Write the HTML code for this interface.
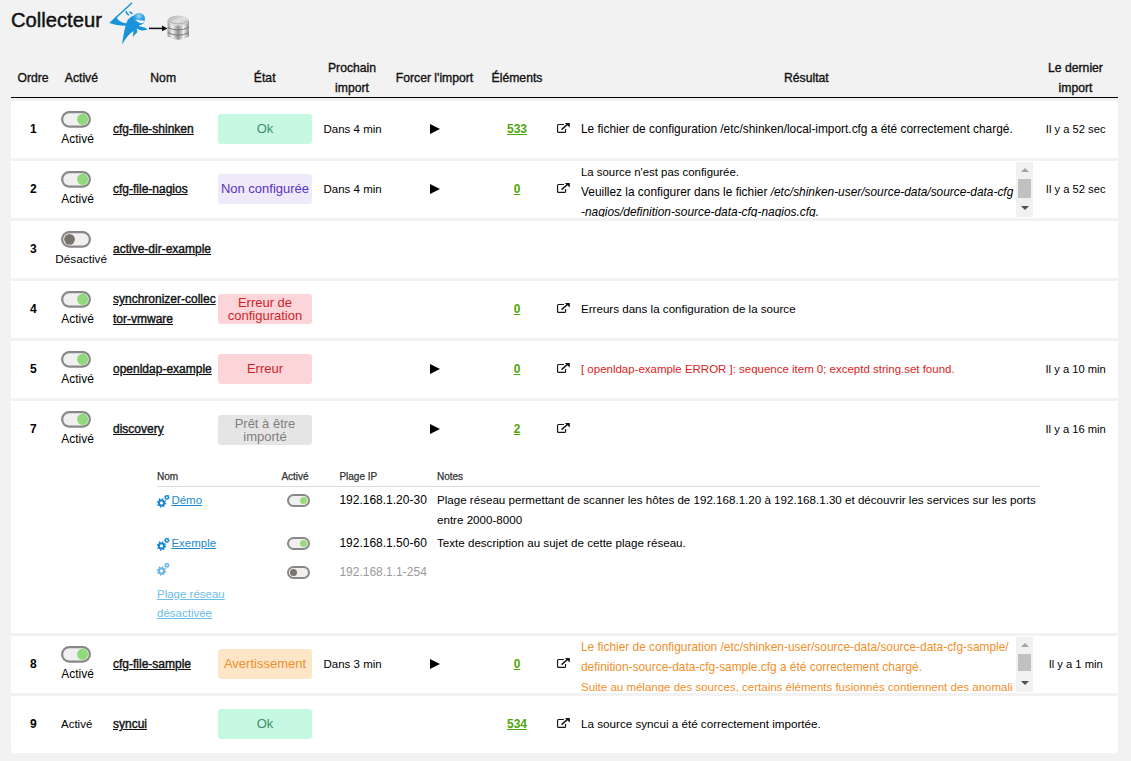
<!DOCTYPE html><html><head><meta charset='utf-8'><title>Collecteur</title><style>
*{box-sizing:border-box}
html,body{margin:0;padding:0}
body{width:1131px;height:761px;overflow:hidden;position:relative;background:#f2f2f2;font-family:"Liberation Sans",sans-serif;color:#000;font-size:12px}
.a{position:absolute;white-space:nowrap}
.row{position:absolute;left:11px;width:1107px;background:#fff}
.th{color:#111;font-size:12.2px;-webkit-text-stroke:0.35px #111}
.nm{text-decoration:underline;color:#111;font-size:12px;-webkit-text-stroke:0.4px #111}
.cnt{font-weight:bold;text-decoration:underline;color:#4fa60a}
.bd{position:absolute;left:218px;width:94px;height:30px;border-radius:3px;text-align:center;font-size:13px}
.play{position:absolute;left:430px;width:0;height:0;border-top:5px solid transparent;border-bottom:5px solid transparent;border-left:10px solid #000}
.ext{position:absolute}
.sb{position:absolute;left:1016px;width:17px;background:#f1f1f1}
.sb .t{position:absolute;left:2px;width:13px;background:#c1c1c1}
.sb .u{position:absolute;left:5px;top:6px;width:0;height:0;border-left:4px solid transparent;border-right:4px solid transparent;border-bottom:4px solid #a3a3a3}
.sb .d{position:absolute;left:5px;bottom:7px;width:0;height:0;border-left:4px solid transparent;border-right:4px solid transparent;border-top:4px solid #505050}
.stog{position:absolute;left:287px;width:23px;height:13px;border:2px solid #888;border-radius:6.5px;background:#f0f0f0}
.stog i{position:absolute;top:1px;right:1px;width:7px;height:7px;border-radius:50%;background:#9ad97b}
.stog.off i{left:1px;right:auto;background:#7a746f}
.sth{font-size:10px;color:#333;-webkit-text-stroke:0.25px #333}
.lnk{color:#1d8ad0;text-decoration:underline}
</style></head><body>
<div class='a' style='left:11px;top:8px;font-size:20.2px;line-height:24px;color:#111;-webkit-text-stroke:0.45px #111'>Collecteur</div>
<svg class='a' style='left:105px;top:0' width='90' height='46' viewBox='105 0 90 46'>
<defs>
<radialGradient id='hg' cx='0.5' cy='0.25' r='0.7'><stop offset='0' stop-color='#a9dcf7'/><stop offset='0.45' stop-color='#3aa6e6'/><stop offset='1' stop-color='#1591da'/></radialGradient>
<linearGradient id='dbg' x1='0' x2='1'><stop offset='0' stop-color='#9a9a9a'/><stop offset='0.22' stop-color='#f2f2f2'/><stop offset='0.5' stop-color='#8f8f8f'/><stop offset='0.75' stop-color='#f0f0f0'/><stop offset='1' stop-color='#8a8a8a'/></linearGradient>
<linearGradient id='dbt' x1='0' y1='0' x2='1' y2='1'><stop offset='0' stop-color='#a8a8a8'/><stop offset='0.5' stop-color='#dedede'/><stop offset='1' stop-color='#c8c8c8'/></linearGradient>
</defs>
<g fill='#1793db'>
<path d='M110.4 22.7 L131.6 3.3' stroke='#1793db' stroke-width='1.45' stroke-linecap='round'/>
<path d='M110.3 22.9 L116.4 16.1 Q117.4 22.6 127.5 23.6 L127.8 25.6 Q117.5 26.2 110.3 22.9 Z'/>
<path d='M128 19.5 Q131 16 135 15 L139.4 26 L140.2 26.6 Q143 27.2 144.6 27.4 L147.6 29.5 Q144 30.6 141.6 30.4 L136.4 28.6 Q137.8 30.5 137.2 32.2 L132.6 37.2 Q133.6 33.5 133.4 31 Q127.6 34.5 122.1 44.6 Q123.4 33.5 125.4 26.5 Q126.4 21.8 128 19.5 Z'/>
<path d='M126.1 11.2 Q126.4 14 129.1 15.1' fill='none' stroke='#1793db' stroke-width='1.5'/>
<path d='M129.3 12.1 Q131.2 12.4 132.4 14.1' fill='none' stroke='#1793db' stroke-width='1.5'/>
</g>
<circle cx='139' cy='19.1' r='6.1' fill='url(#hg)'/>
<path d='M135.6 19.6 Q140 21 145 20.5 Q143.6 23.3 140.6 23.2 Q137.4 22.6 135.6 19.6 Z' fill='#fff'/>
<path d='M149 28.4 L163 28.4' stroke='#111' stroke-width='1.5'/>
<path d='M162 25.6 L167.6 28.4 L162 31.2 Z' fill='#111'/>
<path d='M167.6 20.6 L167.6 36.6 Q178.2 43 188.9 36.6 L188.9 20.6 Z' fill='url(#dbg)'/>
<ellipse cx='178.25' cy='20.6' rx='10.65' ry='5.2' fill='url(#dbt)'/>
<path d='M167.6 20.6 Q178.2 27.2 188.9 20.6' fill='none' stroke='#9a9a9a' stroke-width='0.7'/>
<path d='M167.6 27.4 Q178.2 32.6 188.9 27.4' stroke='#6f6f6f' stroke-width='0.9' fill='none'/>
<path d='M167.6 32.6 Q178.2 37.8 188.9 32.6' stroke='#6f6f6f' stroke-width='0.9' fill='none'/>
</svg>
<div class='a th' style='top:68px;line-height:20px;left:3.0px;width:60px;text-align:center;'>Ordre</div>
<div class='a th' style='top:68px;line-height:20px;left:51.400000000000006px;width:60px;text-align:center;'>Activé</div>
<div class='a th' style='top:68px;line-height:20px;left:133.2px;width:60px;text-align:center;'>Nom</div>
<div class='a th' style='top:68px;line-height:20px;left:234.7px;width:60px;text-align:center;'>État</div>
<div class='a th' style='top:58px;line-height:20px;left:312.0px;width:80px;text-align:center;'>Prochain</div>
<div class='a th' style='top:78px;line-height:20px;left:312.0px;width:80px;text-align:center;'>import</div>
<div class='a th' style='top:68px;line-height:20px;left:384.5px;width:100px;text-align:center;'>Forcer l'import</div>
<div class='a th' style='top:68px;line-height:20px;left:477.0px;width:80px;text-align:center;'>Éléments</div>
<div class='a th' style='top:68px;line-height:20px;left:756.4px;width:100px;text-align:center;'>Résultat</div>
<div class='a th' style='top:58px;line-height:20px;left:1035.5px;width:80px;text-align:center;'>Le dernier</div>
<div class='a th' style='top:78px;line-height:20px;left:1035.5px;width:80px;text-align:center;'>import</div>
<div class='a' style='left:11px;top:97px;width:1107px;height:1px;background:#000'></div>
<div class='row' style='top:101px;height:57px;border-top-right-radius:4px'></div>
<div class='a ' style='top:119px;line-height:20px;left:18.299999999999997px;width:30px;text-align:center;font-weight:bold'>1</div>
<svg class='a' style='left:60px;top:110px' width='32' height='18' viewBox='0 0 32 18'><rect x='2.1' y='2.1' width='27.8' height='14.5' rx='7.25' fill='#f0f0f0' stroke='#888' stroke-width='2.2'/><circle cx='22.6' cy='9.35' r='5.55' fill='#8fd97a'/></svg>
<div class='a ' style='top:129px;line-height:20px;font-size:12px;left:37.599999999999994px;width:80px;text-align:center;'>Activé</div>
<div class='a nm' style='top:119px;line-height:20px;left:113px;'>cfg-file-shinken</div>
<div class='a ' style='top:119px;line-height:20px;font-size:11.5px;left:323.5px;'>Dans 4 min</div>
<div class='play' style='top:124px'></div>
<div class='a cnt' style='top:119px;line-height:20px;left:497.0px;width:40px;text-align:center;'>533</div>
<svg class='ext' style='top:122px;left:556px' width='15' height='13' viewBox='0 0 15 13'><path d='M8 2.45 H2.5 Q1.55 2.45 1.55 3.4 V9.4 Q1.55 10.35 2.5 10.35 H8.6 Q9.55 10.35 9.55 9.4 V7' fill='none' stroke='#151515' stroke-width='1.15'/><path d='M5.6 7.6 L11.6 2.2' stroke='#151515' stroke-width='1.5'/><path d='M8.8 1 H13.8 V5.6 Z' fill='#151515'/></svg>
<div class='a ' style='top:119px;line-height:20px;left:581px;color:#000;font-size:11.88px'>Le fichier de configuration /etc/shinken/local-import.cfg a été correctement chargé.</div>
<div class='a ' style='top:119px;line-height:20px;font-size:11.2px;left:1025.7px;width:100px;text-align:center;'>Il y a 52 sec</div>
<div class='bd' style='top:114px;background:#c6f8e2;color:#3e8f6a;line-height:30px'>Ok</div>
<div class='row' style='top:161px;height:57px;'></div>
<div class='a ' style='top:179px;line-height:20px;left:18.299999999999997px;width:30px;text-align:center;font-weight:bold'>2</div>
<svg class='a' style='left:60px;top:170px' width='32' height='18' viewBox='0 0 32 18'><rect x='2.1' y='2.1' width='27.8' height='14.5' rx='7.25' fill='#f0f0f0' stroke='#888' stroke-width='2.2'/><circle cx='22.6' cy='9.35' r='5.55' fill='#8fd97a'/></svg>
<div class='a ' style='top:189px;line-height:20px;font-size:12px;left:37.599999999999994px;width:80px;text-align:center;'>Activé</div>
<div class='a nm' style='top:179px;line-height:20px;left:113px;'>cfg-file-nagios</div>
<div class='a ' style='top:179px;line-height:20px;font-size:11.5px;left:323.5px;'>Dans 4 min</div>
<div class='play' style='top:184px'></div>
<div class='a cnt' style='top:179px;line-height:20px;left:497.0px;width:40px;text-align:center;'>0</div>
<svg class='ext' style='top:182px;left:556px' width='15' height='13' viewBox='0 0 15 13'><path d='M8 2.45 H2.5 Q1.55 2.45 1.55 3.4 V9.4 Q1.55 10.35 2.5 10.35 H8.6 Q9.55 10.35 9.55 9.4 V7' fill='none' stroke='#151515' stroke-width='1.15'/><path d='M5.6 7.6 L11.6 2.2' stroke='#151515' stroke-width='1.5'/><path d='M8.8 1 H13.8 V5.6 Z' fill='#151515'/></svg>
<div class='a ' style='top:179px;line-height:20px;font-size:11.2px;left:1025.7px;width:100px;text-align:center;'>Il y a 52 sec</div>
<div class='bd' style='top:174px;background:#efeafa;color:#5a33c2;line-height:30px'>Non configurée</div>
<div class='a' style='left:581px;top:162px;width:435px;height:55px;overflow:hidden;font-size:11.9px;line-height:20px;color:#000'><span style='font-size:11.4px'>La source n'est pas configurée.</span><br>Veuillez la configurer dans le fichier <i>/etc/shinken-user/source-data/source-data-cfg</i><br><i>-nagios/definition-source-data-cfg-nagios.cfg.</i></div>
<div class='sb' style='top:162px;height:55px'><div class='u'></div><div class='t' style='top:17px;height:19px'></div><div class='d'></div></div>
<div class='row' style='top:221px;height:57px;'></div>
<div class='a ' style='top:239px;line-height:20px;left:18.299999999999997px;width:30px;text-align:center;font-weight:bold'>3</div>
<svg class='a' style='left:60px;top:230px' width='32' height='18' viewBox='0 0 32 18'><rect x='2.1' y='2.1' width='27.8' height='14.5' rx='7.25' fill='#f0f0f0' stroke='#888' stroke-width='2.2'/><circle cx='9.55' cy='9.35' r='5.35' fill='#7a746f'/></svg>
<div class='a ' style='top:249px;line-height:20px;font-size:11.8px;left:41.2px;width:80px;text-align:center;'>Désactivé</div>
<div class='a nm' style='top:239px;line-height:20px;left:113px;'>active-dir-example</div>
<div class='row' style='top:281px;height:57px;'></div>
<div class='a ' style='top:299px;line-height:20px;left:18.299999999999997px;width:30px;text-align:center;font-weight:bold'>4</div>
<svg class='a' style='left:60px;top:290px' width='32' height='18' viewBox='0 0 32 18'><rect x='2.1' y='2.1' width='27.8' height='14.5' rx='7.25' fill='#f0f0f0' stroke='#888' stroke-width='2.2'/><circle cx='22.6' cy='9.35' r='5.55' fill='#8fd97a'/></svg>
<div class='a ' style='top:309px;line-height:20px;font-size:12px;left:37.599999999999994px;width:80px;text-align:center;'>Activé</div>
<div class='a nm' style='top:289px;line-height:20px;left:113px;'>synchronizer-collec</div>
<div class='a nm' style='top:309px;line-height:20px;left:113px;'>tor-vmware</div>
<div class='bd' style='top:294px;background:#fbd5d8;color:#cf1f2b;line-height:12.5px;padding-top:3px'>Erreur de<br>configuration</div>
<div class='a cnt' style='top:299px;line-height:20px;left:497.0px;width:40px;text-align:center;'>0</div>
<svg class='ext' style='top:302px;left:556px' width='15' height='13' viewBox='0 0 15 13'><path d='M8 2.45 H2.5 Q1.55 2.45 1.55 3.4 V9.4 Q1.55 10.35 2.5 10.35 H8.6 Q9.55 10.35 9.55 9.4 V7' fill='none' stroke='#151515' stroke-width='1.15'/><path d='M5.6 7.6 L11.6 2.2' stroke='#151515' stroke-width='1.5'/><path d='M8.8 1 H13.8 V5.6 Z' fill='#151515'/></svg>
<div class='a ' style='top:299px;line-height:20px;left:581px;font-size:11.6px'>Erreurs dans la configuration de la source</div>
<div class='row' style='top:341px;height:57px;'></div>
<div class='a ' style='top:359px;line-height:20px;left:18.299999999999997px;width:30px;text-align:center;font-weight:bold'>5</div>
<svg class='a' style='left:60px;top:350px' width='32' height='18' viewBox='0 0 32 18'><rect x='2.1' y='2.1' width='27.8' height='14.5' rx='7.25' fill='#f0f0f0' stroke='#888' stroke-width='2.2'/><circle cx='22.6' cy='9.35' r='5.55' fill='#8fd97a'/></svg>
<div class='a ' style='top:369px;line-height:20px;font-size:12px;left:37.599999999999994px;width:80px;text-align:center;'>Activé</div>
<div class='a nm' style='top:359px;line-height:20px;left:113px;'>openldap-example</div>
<div class='play' style='top:364px'></div>
<div class='a cnt' style='top:359px;line-height:20px;left:497.0px;width:40px;text-align:center;'>0</div>
<svg class='ext' style='top:362px;left:556px' width='15' height='13' viewBox='0 0 15 13'><path d='M8 2.45 H2.5 Q1.55 2.45 1.55 3.4 V9.4 Q1.55 10.35 2.5 10.35 H8.6 Q9.55 10.35 9.55 9.4 V7' fill='none' stroke='#151515' stroke-width='1.15'/><path d='M5.6 7.6 L11.6 2.2' stroke='#151515' stroke-width='1.5'/><path d='M8.8 1 H13.8 V5.6 Z' fill='#151515'/></svg>
<div class='a ' style='top:359px;line-height:20px;left:581px;color:#dd2222;font-size:11.48px'>[ openldap-example ERROR ]: sequence item 0; exceptd string.set found.</div>
<div class='a ' style='top:359px;line-height:20px;font-size:11.2px;left:1025.7px;width:100px;text-align:center;'>Il y a 10 min</div>
<div class='bd' style='top:354px;background:#fbd5d8;color:#cf1f2b;line-height:30px'>Erreur</div>
<div class='row' style='top:401px;height:232px;'></div>
<div class='a ' style='top:419px;line-height:20px;left:18.299999999999997px;width:30px;text-align:center;font-weight:bold'>7</div>
<svg class='a' style='left:60px;top:410px' width='32' height='18' viewBox='0 0 32 18'><rect x='2.1' y='2.1' width='27.8' height='14.5' rx='7.25' fill='#f0f0f0' stroke='#888' stroke-width='2.2'/><circle cx='22.6' cy='9.35' r='5.55' fill='#8fd97a'/></svg>
<div class='a ' style='top:429px;line-height:20px;font-size:12px;left:37.599999999999994px;width:80px;text-align:center;'>Activé</div>
<div class='a nm' style='top:419px;line-height:20px;left:113px;'>discovery</div>
<div class='play' style='top:424px'></div>
<div class='a cnt' style='top:419px;line-height:20px;left:497.0px;width:40px;text-align:center;'>2</div>
<svg class='ext' style='top:422px;left:556px' width='15' height='13' viewBox='0 0 15 13'><path d='M8 2.45 H2.5 Q1.55 2.45 1.55 3.4 V9.4 Q1.55 10.35 2.5 10.35 H8.6 Q9.55 10.35 9.55 9.4 V7' fill='none' stroke='#151515' stroke-width='1.15'/><path d='M5.6 7.6 L11.6 2.2' stroke='#151515' stroke-width='1.5'/><path d='M8.8 1 H13.8 V5.6 Z' fill='#151515'/></svg>
<div class='a ' style='top:419px;line-height:20px;font-size:11.2px;left:1025.7px;width:100px;text-align:center;'>Il y a 16 min</div>
<div class='bd' style='top:415px;background:#e5e5e5;color:#7e7e7e;line-height:12.5px;padding-top:3px'>Prêt à être<br>importé</div>
<div class='a sth' style='top:467px;line-height:20px;left:157px;'>Nom</div>
<div class='a sth' style='top:467px;line-height:20px;left:265.0px;width:60px;text-align:center;'>Activé</div>
<div class='a sth' style='top:467px;line-height:20px;left:339.4px;'>Plage IP</div>
<div class='a sth' style='top:467px;line-height:20px;left:437px;'>Notes</div>
<div class='a' style='left:157px;top:486px;width:883px;height:1px;background:#dcdcdc'></div>
<svg class='a' style='left:156px;top:495px' width='15' height='14' viewBox='0 0 15 14'><circle cx='5.5' cy='7.9' r='2.6' fill='none' stroke='#1585d6' stroke-width='2'/><circle cx='5.5' cy='7.9' r='4' fill='none' stroke='#1585d6' stroke-width='1.6' stroke-dasharray='1.3 1.84'/><circle cx='10.9' cy='2.3' r='1.55' fill='none' stroke='#1585d6' stroke-width='1.3'/><circle cx='10.9' cy='2.3' r='2.4' fill='none' stroke='#1585d6' stroke-width='1' stroke-dasharray='0.9 1.0'/></svg>
<div class='a lnk' style='top:490px;line-height:20px;font-size:11.5px;left:171.4px;'>Démo</div>
<div class='stog' style='top:494px'><i></i></div>
<div class='a ' style='top:490px;line-height:20px;left:339.4px;'>192.168.1.20-30</div>
<div class='a ' style='top:490px;line-height:20px;font-size:11.6px;left:437px;'>Plage réseau permettant de scanner les hôtes de 192.168.1.20 à 192.168.1.30 et découvrir les services sur les ports</div>
<div class='a ' style='top:510px;line-height:20px;font-size:11.6px;left:437px;'>entre 2000-8000</div>
<svg class='a' style='left:156px;top:538px' width='15' height='14' viewBox='0 0 15 14'><circle cx='5.5' cy='7.9' r='2.6' fill='none' stroke='#1585d6' stroke-width='2'/><circle cx='5.5' cy='7.9' r='4' fill='none' stroke='#1585d6' stroke-width='1.6' stroke-dasharray='1.3 1.84'/><circle cx='10.9' cy='2.3' r='1.55' fill='none' stroke='#1585d6' stroke-width='1.3'/><circle cx='10.9' cy='2.3' r='2.4' fill='none' stroke='#1585d6' stroke-width='1' stroke-dasharray='0.9 1.0'/></svg>
<div class='a lnk' style='top:533px;line-height:20px;font-size:11.5px;left:171.4px;'>Exemple</div>
<div class='stog' style='top:537px'><i></i></div>
<div class='a ' style='top:533px;line-height:20px;left:339.4px;'>192.168.1.50-60</div>
<div class='a ' style='top:533px;line-height:20px;font-size:11.6px;left:437px;'>Texte description au sujet de cette plage réseau.</div>
<svg class='a' style='left:156px;top:563px' width='15' height='14' viewBox='0 0 15 14'><circle cx='5.5' cy='7.9' r='2.6' fill='none' stroke='#6ab5e6' stroke-width='2'/><circle cx='5.5' cy='7.9' r='4' fill='none' stroke='#6ab5e6' stroke-width='1.6' stroke-dasharray='1.3 1.84'/><circle cx='10.9' cy='2.3' r='1.55' fill='none' stroke='#6ab5e6' stroke-width='1.3'/><circle cx='10.9' cy='2.3' r='2.4' fill='none' stroke='#6ab5e6' stroke-width='1' stroke-dasharray='0.9 1.0'/></svg>
<div class='stog off' style='top:566px'><i></i></div>
<div class='a ' style='top:562px;line-height:20px;left:339.4px;color:#9a9a9a'>192.168.1.1-254</div>
<div class='a lnk' style='top:584px;line-height:20px;font-size:11.5px;left:157px;color:#6cbde8'>Plage réseau</div>
<div class='a lnk' style='top:603px;line-height:20px;font-size:11.5px;left:157px;color:#6cbde8'>désactivée</div>
<div class='row' style='top:636px;height:57px;'></div>
<div class='a ' style='top:654px;line-height:20px;left:18.299999999999997px;width:30px;text-align:center;font-weight:bold'>8</div>
<svg class='a' style='left:60px;top:645px' width='32' height='18' viewBox='0 0 32 18'><rect x='2.1' y='2.1' width='27.8' height='14.5' rx='7.25' fill='#f0f0f0' stroke='#888' stroke-width='2.2'/><circle cx='22.6' cy='9.35' r='5.55' fill='#8fd97a'/></svg>
<div class='a ' style='top:664px;line-height:20px;font-size:12px;left:37.599999999999994px;width:80px;text-align:center;'>Activé</div>
<div class='a nm' style='top:654px;line-height:20px;left:113px;'>cfg-file-sample</div>
<div class='a ' style='top:654px;line-height:20px;font-size:11.5px;left:323.5px;'>Dans 3 min</div>
<div class='play' style='top:659px'></div>
<div class='a cnt' style='top:654px;line-height:20px;left:497.0px;width:40px;text-align:center;'>0</div>
<svg class='ext' style='top:657px;left:556px' width='15' height='13' viewBox='0 0 15 13'><path d='M8 2.45 H2.5 Q1.55 2.45 1.55 3.4 V9.4 Q1.55 10.35 2.5 10.35 H8.6 Q9.55 10.35 9.55 9.4 V7' fill='none' stroke='#151515' stroke-width='1.15'/><path d='M5.6 7.6 L11.6 2.2' stroke='#151515' stroke-width='1.5'/><path d='M8.8 1 H13.8 V5.6 Z' fill='#151515'/></svg>
<div class='a ' style='top:654px;line-height:20px;font-size:11.2px;left:1025.7px;width:100px;text-align:center;'>Il y a 1 min</div>
<div class='bd' style='top:649px;background:#fde6c8;color:#ee8f2c;line-height:30px'>Avertissement</div>
<div class='a' style='left:581px;top:637px;width:435px;height:55px;overflow:hidden;font-size:11.9px;line-height:20px;color:#f0902a'>Le fichier de configuration /etc/shinken-user/source-data/source-data-cfg-sample/<br>definition-source-data-cfg-sample.cfg a été correctement chargé.<br><span style='font-size:11.5px'>Suite au mélange des sources, certains éléments fusionnés contiennent des anomali</span></div>
<div class='sb' style='top:637px;height:55px'><div class='u'></div><div class='t' style='top:17px;height:17px'></div><div class='d'></div></div>
<div class='row' style='top:696px;height:57px;border-bottom-left-radius:4px;border-bottom-right-radius:4px'></div>
<div class='a ' style='top:714px;line-height:20px;left:18.299999999999997px;width:30px;text-align:center;font-weight:bold'>9</div>
<div class='a ' style='top:714px;line-height:20px;font-size:11.5px;left:61px;'>Activé</div>
<div class='a nm' style='top:714px;line-height:20px;left:113px;'>syncui</div>
<div class='bd' style='top:709px;background:#c6f8e2;color:#3e8f6a;line-height:30px'>Ok</div>
<div class='a cnt' style='top:714px;line-height:20px;left:497.0px;width:40px;text-align:center;'>534</div>
<svg class='ext' style='top:717px;left:556px' width='15' height='13' viewBox='0 0 15 13'><path d='M8 2.45 H2.5 Q1.55 2.45 1.55 3.4 V9.4 Q1.55 10.35 2.5 10.35 H8.6 Q9.55 10.35 9.55 9.4 V7' fill='none' stroke='#151515' stroke-width='1.15'/><path d='M5.6 7.6 L11.6 2.2' stroke='#151515' stroke-width='1.5'/><path d='M8.8 1 H13.8 V5.6 Z' fill='#151515'/></svg>
<div class='a ' style='top:714px;line-height:20px;left:581px;font-size:11.67px'>La source syncui a été correctement importée.</div>
</body></html>
